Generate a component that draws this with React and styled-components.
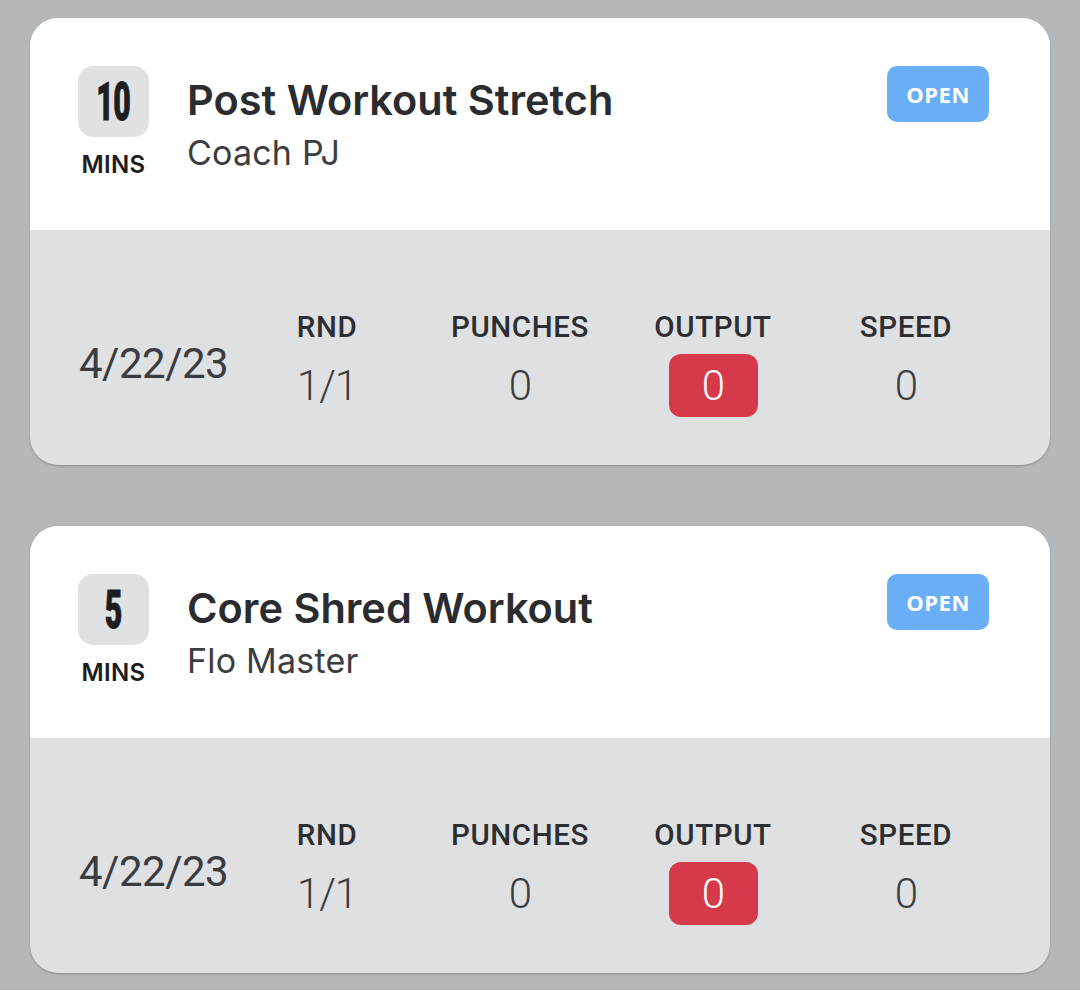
import React from "react";
import styled, { createGlobalStyle } from "styled-components";

const Global = createGlobalStyle`
  html, body { margin: 0; padding: 0; background: #b4b8bb; }
  body { font-family: Roboto, "Noto Sans", sans-serif; }
`;

const Page = styled.div`
  width: 1080px;
  min-height: 990px;
  box-sizing: border-box;
  padding: 18px 30px 0 30px;
  display: flex;
  flex-direction: column;
  gap: 61px;
  background: #b4b8bb;
`;

const Card = styled.div`
  border-radius: 28px;
  overflow: hidden;
  background: #dfe0e2;
  box-shadow: 0 1px 2px rgba(0, 0, 0, 0.25);
  height: 447px;
  display: flex;
  flex-direction: column;
`;

const Header = styled.div`
  background: #ffffff;
  height: 212px;
  box-sizing: border-box;
  padding: 48px 61px 0 48px;
  display: flex;
  align-items: flex-start;
`;

const Duration = styled.div`
  display: flex;
  flex-direction: column;
  align-items: center;
  width: 71px;
`;

const NumBox = styled.div`
  width: 71px;
  height: 71px;
  border-radius: 15px;
  background: #e0e1e3;
  display: flex;
  align-items: center;
  justify-content: center;
`;

const Num = styled.span`
  font-family: Roboto, sans-serif;
  font-weight: 900;
  font-size: 54px;
  line-height: 1;
  color: #1c1d1f;
  display: inline-block;
  transform: scaleX(0.56);
  letter-spacing: -1px;
  -webkit-text-stroke: 1px #1c1d1f;
`;

const Mins = styled.div`
  margin-top: 14px;
  font-family: Inter, sans-serif;
  font-weight: 600;
  font-size: 24px;
  line-height: 28px;
  color: #1c1d1f;
  letter-spacing: 0.4px;
`;

const Titles = styled.div`
  flex: 1;
  margin-left: 38px;
  display: flex;
  flex-direction: column;
  margin-top: 8px;
`;

const Title = styled.div`
  font-family: Inter, sans-serif;
  font-weight: 600;
  font-size: 41.5px;
  line-height: 52px;
  color: #2a2c2f;
`;

const Coach = styled.div`
  margin-top: 6px;
  font-family: Inter, sans-serif;
  font-weight: 400;
  font-size: 34px;
  line-height: 42px;
  color: #3b3d40;
  letter-spacing: 0.2px;
`;

const OpenButton = styled.button`
  width: 102px;
  height: 56px;
  border: none;
  border-radius: 10px;
  background: #6aaef7;
  color: #ffffff;
  font-family: "Open Sans", sans-serif;
  font-weight: 700;
  font-size: 22px;
  letter-spacing: 0.5px;
  padding: 0;
  cursor: pointer;
`;

const Stats = styled.div`
  flex: 1;
  display: grid;
  grid-template-columns: 151.5px repeat(4, 193px);
  align-items: center;
  padding: 32px 0 0 49px;
`;

const DateText = styled.div`
  font-family: Roboto, sans-serif;
  font-size: 42px;
  font-weight: 400;
  color: #3a3c3f;
  letter-spacing: -0.5px;
`;

const Stat = styled.div`
  display: flex;
  flex-direction: column;
  align-items: center;
`;

const Label = styled.div`
  font-family: Roboto, sans-serif;
  font-weight: 500;
  font-size: 29.5px;
  line-height: 34px;
  color: #2c2e31;
  letter-spacing: 0.6px;
`;

const Value = styled.div`
  margin-top: 10px;
  height: 63px;
  min-width: 89px;
  box-sizing: border-box;
  display: flex;
  align-items: center;
  justify-content: center;
  border-radius: 12px;
  font-family: Roboto, sans-serif;
  font-weight: 300;
  font-size: 42px;
  letter-spacing: -1px;
  color: ${(p) => (p.$hot ? "#ffffff" : "#3a3c3f")};
  background: ${(p) => (p.$hot ? "#d63a4a" : "transparent")};
`;

const workouts = [
  { mins: "10", title: "Post Workout Stretch", coach: "Coach PJ" },
  { mins: "5", title: "Core Shred Workout", coach: "Flo Master" },
];

function WorkoutCard({ w }) {
  return (
    <Card>
      <Header>
        <Duration>
          <NumBox>
            <Num>{w.mins}</Num>
          </NumBox>
          <Mins>MINS</Mins>
        </Duration>
        <Titles>
          <Title>{w.title}</Title>
          <Coach>{w.coach}</Coach>
        </Titles>
        <OpenButton>OPEN</OpenButton>
      </Header>
      <Stats>
        <DateText>4/22/23</DateText>
        <Stat>
          <Label>RND</Label>
          <Value>1/1</Value>
        </Stat>
        <Stat>
          <Label>PUNCHES</Label>
          <Value>0</Value>
        </Stat>
        <Stat>
          <Label>OUTPUT</Label>
          <Value $hot>0</Value>
        </Stat>
        <Stat>
          <Label>SPEED</Label>
          <Value>0</Value>
        </Stat>
      </Stats>
    </Card>
  );
}

export default function App() {
  return (
    <>
      <Global />
      <Page>
        {workouts.map((w) => (
          <WorkoutCard key={w.title} w={w} />
        ))}
      </Page>
    </>
  );
}
